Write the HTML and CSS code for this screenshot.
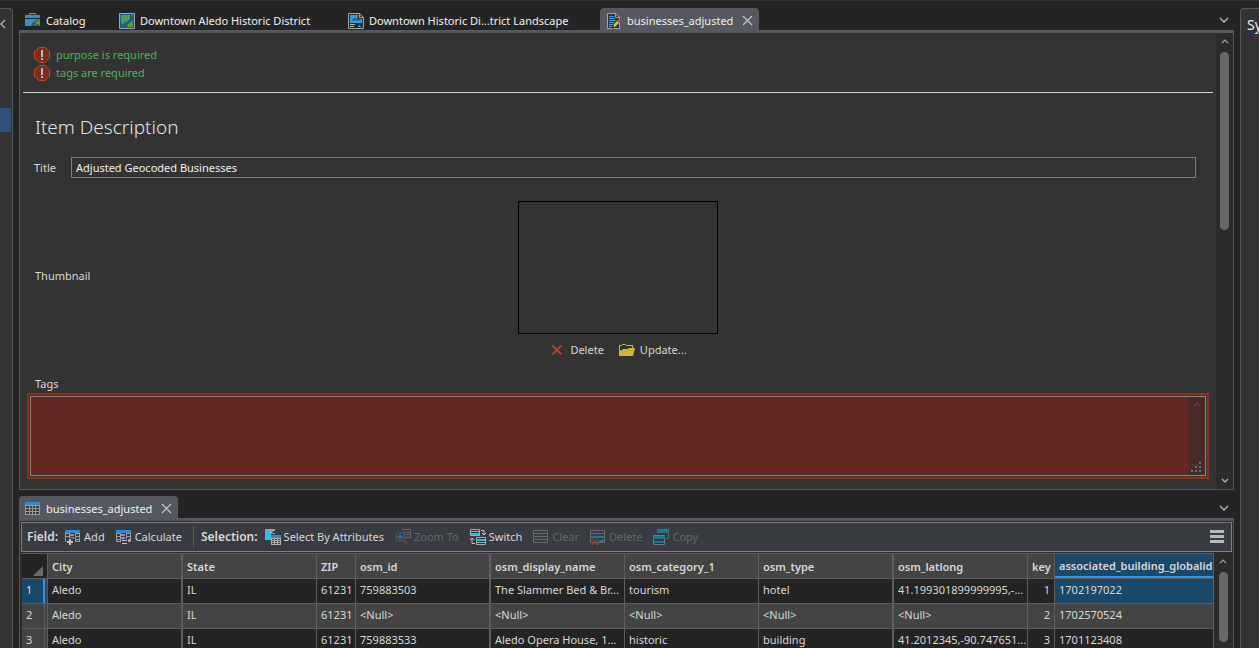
FILE: index.html
```html
<!DOCTYPE html>
<html lang="en">
<head>
  <meta charset="UTF-8">
  <title>businesses_adjusted</title>
  <link rel="stylesheet" href="styles.css">
</head>
<body>
<div class="side left">
  <svg width="6" height="10" viewBox="0 0 6 10"><path d="M5 1L1 5l4 4" fill="none" stroke="#b5b5b5" stroke-width="1.3"/></svg>
  <div class="selected"></div>
</div>

<main class="main">
  <section class="view">
    <nav class="tabs">
      <button type="button" class="tab catalog">
        <svg width="16" height="16" viewBox="0 0 16 16"><path d="M4.500 3V.5h6V3" fill="none" stroke="#4d9bd0"/><path d="M0 2h15v3H0zM0 6h15v7H0z" fill="#3a8fc8"/><path d="M6 13c1-4 4-4 5-6h3v6z" fill="#2f5f43"/><path d="M9 12l3-4h2v3z" fill="#5b9b3d"/></svg>
        Catalog
      </button>
      <button type="button" class="tab map">
        <svg width="16" height="16" viewBox="0 0 16 16"><path d="M.5.5h15v15H.5z" fill="#1d5a86" stroke="#a3a3a3"/><path d="M2 2h9v4L9 8 7 9H5v2l-1 1-2-3z" fill="#559b47"/><path d="M14 7v7H9l-1-2 2-2 2-1z" fill="#559b47"/><path d="M12 2h2v2z" fill="#559b47"/></svg>
        Downtown Aledo Historic District
      </button>
      <button type="button" class="tab layout">
        <svg width="16" height="16" viewBox="0 0 16 16"><path d="M.5.5h11l4 4v11H.5z" fill="#2b2b2b" stroke="#a5a5a5"/><path d="M11.500 .5v4h4" fill="none" stroke="#a5a5a5"/><path d="M2 2h8v4h4v4H2z" fill="#3f9ad6"/><path d="M4 7l2-2 2 1 2-3v2l3 2-3 1-2-1-2 1z" fill="#1d608e"/><path d="M2 11.500h5M2 13.500h4" stroke="#b5b5b5"/><path d="M11 12h1v2h-1zM10 13h3v1h-3z" fill="#3f9ad6"/></svg>
        Downtown Historic Di...trict Landscape
      </button>
      <button type="button" class="tab active">
        <svg width="16" height="16" viewBox="0 0 16 16"><path d="M1.500 .5h8l4 4v11h-12z" fill="#333436" stroke="#a5a5a5"/><path d="M9.500 .5v4h4" fill="none" stroke="#a5a5a5"/><path d="M3 3.500h5M3 5.500h6M3 7.500h7M3 9.500h5M3 11.500h4M3 13.500h3" stroke="#4a9fdc"/><path d="M7 15l1-4 4-4 2 2-4 4z" fill="#e0bd35"/><path d="M11 8l2-2 2 2-2 2z" fill="#b35333"/><path d="M6 16l1-3 1 2z" fill="#222"/></svg>
        businesses_adjusted
        <svg class="close" width="11" height="11" viewBox="0 0 11 11"><path d="M1 1l9 9M10 1l-9 9" stroke="#c8c8c8" stroke-width="1.200"/></svg>
      </button>
      <button type="button" class="more" aria-label="Views"><svg width="8" height="6" viewBox="0 0 8 6"><path d="M0 1l4 4 4-4" fill="none" stroke="#bdbdbd" stroke-width="1.300"/></svg></button>
    </nav>

    <div class="document">
      <form class="form">
        <ul class="errors">
          <li><svg width="16" height="16" viewBox="0 0 16 16"><path d="M5 .5h6L15.500 5v6L11 15.500H5L.5 11V5z" fill="#7b2d17" stroke="#c44a26"/><path d="M7 3h2v7H7zM7 11h2v2H7z" fill="#b9b9b9"/></svg>purpose is required</li>
          <li><svg width="16" height="16" viewBox="0 0 16 16"><path d="M5 .5h6L15.500 5v6L11 15.500H5L.5 11V5z" fill="#7b2d17" stroke="#c44a26"/><path d="M7 3h2v7H7zM7 11h2v2H7z" fill="#b9b9b9"/></svg>tags are required</li>
        </ul>
        <h1>Item Description</h1>
        <div class="title-row">
          <label for="title">Title</label>
          <input type="text" id="title" value="Adjusted Geocoded Businesses">
        </div>
        <div class="thumb-row">
          <span class="thumb-label">Thumbnail</span>
          <div class="thumb">
            <div class="picture"></div>
            <div class="thumb-actions">
              <button type="button"><svg width="16" height="16" viewBox="0 0 16 16"><path d="M3.500 3.500l9 9M12.500 3.500l-9 9" stroke="#b04324" stroke-width="2"/></svg>Delete</button>
              <button type="button"><svg width="16" height="16" viewBox="0 0 16 16"><path d="M.5 13V3.500h2l1-1h3l1 1h6V6" fill="none" stroke="#d0b936"/><path d="M0 14V9l3-1 1-1h5l1-1h6l-2 8z" fill="#cdb836"/></svg>Update...</button>
            </div>
          </div>
        </div>
        <label class="tags-label" for="tags">Tags</label>
        <div class="tags">
          <textarea id="tags"></textarea>
          <div class="tags-scroll">
            <svg width="8" height="5" viewBox="0 0 8 5"><path d="M1 4l3-3 3 3" fill="none" stroke="#74504b"/></svg>
            <svg width="12" height="12" viewBox="0 0 12 12"><path d="M1 3l3 3 3-3" fill="none" stroke="#74504b"/><path d="M8 1h2v2H8zM4 5h2v2H4zM8 5h2v2H8zM0 9h2v2H0zM4 9h2v2H4zM8 9h2v2H8z" fill="#6d6d70"/></svg>
          </div>
        </div>
      </form>
      <div class="scrollbar">
        <svg width="8" height="6" viewBox="0 0 8 6"><path d="M1 5l3-3 3 3" fill="none" stroke="#a0a0a0" stroke-width="1.200"/></svg>
        <div class="handle"></div>
        <svg class="down" width="8" height="6" viewBox="0 0 8 6"><path d="M1 1l3 3 3-3" fill="none" stroke="#bdbdbd" stroke-width="1.200"/></svg>
      </div>
    </div>
  </section>

  <section class="table-view">
    <nav class="tabs">
      <button type="button" class="tab active">
        <svg width="16" height="16" viewBox="0 0 16 16" shape-rendering="crispEdges"><path d="M0 1h15v13H0z" fill="#9a9a9a"/><path d="M0 1h15v3H0z" fill="#2f8cc9"/><path d="M1 5h3v2H1zM5 5h2v2H5zM8 5h2v2H8zM11 5h3v2h-3zM1 8h3v2H1zM5 8h2v2H5zM8 8h2v2H8zM11 8h3v2h-3zM1 11h3v2H1zM5 11h2v2H5zM8 11h2v2H8zM11 11h3v2h-3z" fill="#36383b"/></svg>
        businesses_adjusted
        <svg class="close" width="11" height="11" viewBox="0 0 11 11"><path d="M1 1l9 9M10 1l-9 9" stroke="#c8c8c8" stroke-width="1.200"/></svg>
      </button>
      <button type="button" class="more" aria-label="Tables"><svg width="8" height="6" viewBox="0 0 8 6"><path d="M0 1l4 4 4-4" fill="none" stroke="#bdbdbd" stroke-width="1.300"/></svg></button>
    </nav>

    <div class="table-panel">
      <div class="toolbar">
        <b>Field:</b>
        <button type="button"><svg width="16" height="16" viewBox="0 0 16 16" shape-rendering="crispEdges"><path d="M0 1h15v12H0z" fill="#9d9d9d"/><path d="M0 1h15v3H0z" fill="#2f8cc9"/><path d="M1 5h3v2H1zM11 5h3v2h-3zM1 8h3v2H1zM11 8h3v2h-3zM11 11h3v1h-3zM5 4h5v9H5z" fill="#34373b"/><path d="M5 5h4v2H5zM5 8h4v2H5z" fill="#9682d6"/><path d="M1 9h7v7H1z" fill="#383b40"/><path d="M4 10h2v2h2v2H6v2H4v-2H2v-2h2z" fill="#c2c2c2"/></svg>Add</button>
        <button type="button"><svg width="16" height="16" viewBox="0 0 16 16" shape-rendering="crispEdges"><path d="M0 1h15v12H0z" fill="#9d9d9d"/><path d="M0 1h15v3H0z" fill="#2f8cc9"/><path d="M1 5h3v2H1zM11 5h3v2h-3zM1 8h3v2H1zM11 8h3v2h-3zM1 11h3v1H1zM5 4h5v9H5z" fill="#34373b"/><path d="M5 5h4v2H5zM5 8h4v2H5z" fill="#9682d6"/><path d="M5 10h7v6H5z" fill="#383b40"/><path d="M6 11h5v1H6zM6 14h5v1H6z" fill="#c2c2c2"/></svg>Calculate</button>
        <span class="divider"></span>
        <b>Selection:</b>
        <button type="button"><svg width="16" height="16" viewBox="0 0 16 16" shape-rendering="crispEdges"><path d="M0 0h3l2 4h5v1H6v6H0z" fill="#29bfef"/><path d="M3 0h7v2H8L6 4H4z" fill="#a0a0a0"/><path d="M6 6h10v10H6z" fill="#b0b0b0"/><path d="M6 6h10v3H6z" fill="#2f8cc9"/><path d="M7 10h2v1H7zM10 10h2v1h-2zM13 10h2v1h-2zM7 12h2v1H7zM10 12h2v1h-2zM13 12h2v1h-2zM7 14h2v1H7zM10 14h2v1h-2zM13 14h2v1h-2z" fill="#383b40"/></svg>Select By Attributes</button>
        <button type="button" disabled><svg width="16" height="16" viewBox="0 0 16 16"><path d="M7 .5h8.500v8H9M8 3.500h7M9 5.500h6" fill="none" stroke="#626466"/><circle cx="5" cy="8" r="4.500" fill="none" stroke="#3d687f"/><path d="M5 5v6M2 8h6" stroke="#346f8b" stroke-width="1.500"/><path d="M8 11l4 4" stroke="#704332" stroke-width="2"/></svg>Zoom To</button>
        <button type="button"><svg width="16" height="16" viewBox="0 0 16 16"><path d="M.5.5h9v6h-9zM6.500 8.500h9v7h-9z" fill="#2f3235" stroke="#a9a9a9"/><path d="M0 2.500h9M7 13.500h8" stroke="#a9a9a9"/><path d="M1 4h8v2H1zM7 10h8v2H7z" fill="#18c1ef"/><path d="M11 1.500h3v4M12 4l2 2 2-2M5 14.500H2V10M0 11l2-2 2 2" fill="none" stroke="#c0c0c0"/></svg>Switch</button>
        <button type="button" disabled><svg width="16" height="16" viewBox="0 0 16 16"><path d="M.5 1.500h14v12H.5zM1 4.500h13M1 7.500h13M1 10.500h13" fill="none" stroke="#66686a"/></svg>Clear</button>
        <button type="button" disabled><svg width="16" height="16" viewBox="0 0 16 16"><path d="M.5 1.500h14v12H.5zM1 4.500h13" fill="none" stroke="#66686a"/><path d="M1 7h13v2H1zM9 11h5v2H9z" fill="#1f758f"/><path d="M2 10l6 6M8 10l-6 6" stroke="#8a4530" stroke-width="1.500"/></svg>Delete</button>
        <button type="button" disabled><svg width="16" height="16" viewBox="0 0 16 16"><path d="M4.500 .5h11v9h-3" fill="none" stroke="#66686a"/><path d="M4 1h12v3H4z" fill="#1f758f"/><path d="M.5 6.500h11v9H.5z" fill="#34373b" stroke="#77797b"/><path d="M0 7h12v3H0zM1 12h10v2H1z" fill="#1f758f"/></svg>Copy</button>
        <button type="button" class="menu" aria-label="Menu"><svg width="14" height="14" viewBox="0 0 14 14"><path d="M0 0h14v3H0zM0 5h14v3H0zM0 10h14v3H0z" fill="#b9b9b9"/></svg></button>
      </div>
      <div class="grid">
        <table>
          <colgroup>
            <col class="c-num"><col class="c-city"><col class="c-text"><col class="c-zip"><col class="c-id"><col class="c-text"><col class="c-text"><col class="c-type"><col class="c-text"><col class="c-key"><col>
          </colgroup>
          <thead>
            <tr>
              <th class="corner"><svg width="10" height="10" viewBox="0 0 10 10"><path d="M10 0v10H0z" fill="#6b6b6b"/></svg></th>
              <th class="thick">City</th><th>State</th><th>ZIP</th><th class="thick">osm_id</th><th>osm_display_name</th><th>osm_category_1</th><th class="thick">osm_type</th><th>osm_latlong</th><th>key</th><th class="picked">associated_building_globalid</th>
            </tr>
          </thead>
          <tbody>
            <tr>
              <th class="num current"><span>1</span></th>
              <td class="thick">Aledo</td><td>IL</td><td>61231</td><td class="thick">759883503</td><td>The Slammer Bed &amp; Br...</td><td>tourism</td><td class="thick">hotel</td><td>41.199301899999995,-...</td><td class="key">1</td><td class="cell-picked">1702197022</td>
            </tr>
            <tr>
              <th class="num"><span>2</span></th>
              <td class="thick">Aledo</td><td>IL</td><td>61231</td><td class="thick">&lt;Null&gt;</td><td>&lt;Null&gt;</td><td>&lt;Null&gt;</td><td class="thick">&lt;Null&gt;</td><td>&lt;Null&gt;</td><td class="key">2</td><td>1702570524</td>
            </tr>
            <tr>
              <th class="num"><span>3</span></th>
              <td class="thick">Aledo</td><td>IL</td><td>61231</td><td class="thick">759883533</td><td>Aledo Opera House, 1...</td><td>historic</td><td class="thick">building</td><td>41.2012345,-90.747651...</td><td class="key">3</td><td>1701123408</td>
            </tr>
          </tbody>
        </table>
        <div class="scrollbar">
          <svg width="8" height="6" viewBox="0 0 8 6"><path d="M1 5l3-3 3 3" fill="none" stroke="#a0a0a0" stroke-width="1.200"/></svg>
          <div class="handle"></div>
        </div>
      </div>
    </div>
  </section>
</main>

<aside class="side right">Sy</aside>
</body>
</html>
```
FILE: styles.css
```css
* {
  box-sizing: border-box;
}

body {
  margin: 0;
  height: 100vh;
  overflow: hidden;
  display: grid;
  grid-template-columns: 13px 1fr 19px;
  gap: 6px;
  padding-top: 7px;
  border-top: 1px solid #333;
  background: #242424;
  color: #d8d8d8;
  font: 11px/16px "Noto Sans", "Open Sans", sans-serif;
}

button, input, textarea {
  font: inherit;
  color: inherit;
}

button {
  display: flex;
  align-items: center;
  padding: 0;
  border: 0;
  background: none;
  white-space: nowrap;
}

svg {
  flex: none;
  display: block;
}

/* docked panes on both sides */
.side {
  overflow: hidden;
  background: #333;
  border: 1px solid #555860;
}

.left {
  border-width: 1px 1px 0 0;
  border-radius: 0 4px 0 0;
  padding-top: 10px;
}

.selected {
  height: 24px;
  width: 11px;
  margin-top: 79px;
  background: #31517a;
}

.right {
  border-width: 1px 0 0 1px;
  border-radius: 4px 0 0 0;
  padding: 4px 0 0 6px;
  font-size: 14px;
  line-height: 24px;
  color: #f0f0f0;
}

.main {
  min-width: 0;
  min-height: 0;
  display: flex;
  flex-direction: column;
  gap: 6px;
}

.view {
  flex: 1;
  min-height: 0;
  display: flex;
  flex-direction: column;
}

.tabs {
  display: flex;
  height: 25px;
  border-bottom: 3px solid #555860;
}

.tab {
  height: 22px;
  gap: 5px;
  padding: 3px 6px 0;
  border-radius: 4px 4px 0 0;
  color: #f0f0f0;
}

.tab.active {
  background: #555860;
}

.catalog {
  width: 94px;
}

.map {
  width: 229px;
}

.layout {
  width: 258px;
}

.close {
  margin-left: 4px;
}

.more {
  margin-left: auto;
  padding: 2px 6px 0 0;
}

.document {
  flex: 1;
  min-height: 0;
  display: flex;
  border: 1px solid #555860;
  border-top: 0;
  background: #333;
}

.form {
  flex: 1;
  min-width: 0;
  overflow: hidden;
}

.errors {
  margin: 0 3px;
  padding: 13px 11px 10px;
  border-bottom: 1px solid #d0d0d0;
  list-style: none;
  color: #53b153;
}

.errors li {
  display: flex;
  align-items: center;
  gap: 6px;
  height: 18px;
}

h1 {
  margin: 20px 15px 16px;
  font-size: 19px;
  line-height: 28px;
  font-weight: 300;
  color: #e4e4e4;
}

.title-row {
  display: flex;
  align-items: center;
  padding: 0 20px 0 14px;
}

.title-row label {
  width: 37px;
}

.title-row input {
  flex: 1;
  min-width: 0;
  height: 21px;
  padding: 0 4px;
  border: 1px solid #7d7d7d;
  background: #333;
  color: #f0f0f0;
}

.thumb-row {
  display: grid;
  grid-template-columns: 1fr 200px 1fr;
  align-items: center;
  margin-top: 23px;
  padding: 0 15px;
}

.thumb-label {
  padding-bottom: 8px;
}

.picture {
  height: 133px;
  border: 1px solid #000;
}

.thumb-actions {
  display: flex;
  justify-content: center;
  gap: 15px;
  margin-top: 8px;
}

.thumb-actions button {
  gap: 5px;
}

.tags-label {
  display: block;
  margin: 18px 15px 1px;
}

.tags {
  display: flex;
  height: 86px;
  margin: 0 7px;
  padding: 1px;
  border: 2px solid #8b3217;
}

.tags textarea {
  flex: 1;
  min-width: 0;
  padding: 4px;
  border: 1px solid #8c8583;
  border-right: 0;
  background: #632823;
  resize: none;
}

.tags-scroll {
  width: 18px;
  display: flex;
  flex-direction: column;
  align-items: center;
  justify-content: space-between;
  padding: 5px 0 2px;
  border: 1px solid #8c8583;
  border-left: 0;
  background: #482a27;
}

.scrollbar {
  width: 17px;
  display: flex;
  flex-direction: column;
  align-items: center;
  padding: 5px 0;
  background: #2b2b2b;
}

.handle {
  width: 9px;
  height: 178px;
  margin-top: 8px;
  border-radius: 5px;
  background: #686868;
}

.down {
  margin-top: auto;
}

.table-panel {
  padding: 1px 1px 0;
  border: 1px solid #555860;
  border-width: 0 1px;
  background: #2b2b2b;
}

.table-view {
  height: 152px;
}

.toolbar {
  display: flex;
  align-items: center;
  gap: 11px;
  height: 30px;
  padding: 0 7px 0 5px;
  border: 1px solid #808080;
  background: #383b40;
}

.toolbar b {
  margin-right: -4px;
  font-size: 12px;
  font-weight: 600;
}

.toolbar button {
  gap: 3px;
}

.toolbar button:disabled {
  color: #65676a;
}

.toolbar .menu {
  margin-left: auto;
}

.divider {
  width: 1px;
  height: 22px;
  margin-right: -4px;
  background: #54575b;
}

.grid {
  display: flex;
  padding: 1px 0 0 1px;
}

table {
  flex: 1;
  width: 100%;
  min-width: 0;
  table-layout: fixed;
  border-collapse: separate;
  border-spacing: 0;
}

.c-num {
  width: 26px;
}

.c-city, .c-id, .c-type {
  width: 135px;
}

.c-text {
  width: 134px;
}

.c-zip {
  width: 39px;
}

.c-key {
  width: 27px;
}

th, td {
  height: 25px;
  padding: 0 4px 2px;
  border: 1px solid #5d5d5d;
  border-width: 1px 1px 0 0;
  overflow: hidden;
  white-space: nowrap;
  text-align: left;
}

thead th {
  padding: 2px 4px 0;
  background: #444;
  font-weight: 600;
}

tbody tr {
  background: #242424;
}

tbody tr:nth-child(2), .num {
  background: #444;
}

th.thick, td.thick {
  border-right-width: 2px;
}

th.corner {
  padding: 10px 5px 0 11px;
  background: #242424;
}

th.num {
  padding: 0 2px 0 0;
  font-weight: 400;
}

.num span {
  display: block;
  height: 24px;
  padding-left: 4px;
  border-right: 1px solid #5d5d5d;
  line-height: 22px;
}

.current span {
  border-right: 2px solid #2b95f2;
  background: #1c4868;
}

td.key {
  text-align: right;
}

th.picked {
  padding-bottom: 0;
  border-bottom: 2px solid #2b95f2;
  background: #1c4868;
}

.cell-picked {
  background: #1c4868;
}

.grid .scrollbar {
  flex: none;
  width: 18px;
}

.grid .handle {
  height: 70px;
}
```
